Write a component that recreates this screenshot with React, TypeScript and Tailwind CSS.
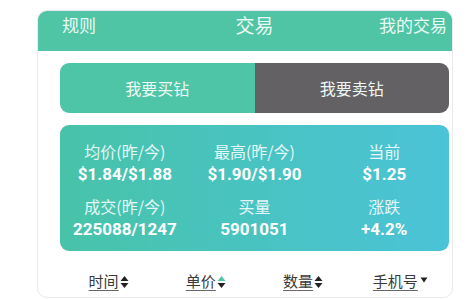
import React from "react";

const cjk = { fontFamily: '"Noto Sans CJK SC", "Noto Sans", sans-serif' };
const num = { fontFamily: 'Roboto, "Noto Sans CJK SC", sans-serif' };

function SortIcon({ active }: { active?: boolean }) {
  return (
    <svg width="9" height="14" viewBox="0 0 9 14" className="ml-[1px]">
      <path d="M0.5 6 L4.5 1 L8.5 6 Z" fill={active ? "#4ec5a5" : "#222"} />
      <path d="M0.5 8 L4.5 13 L8.5 8 Z" fill="#222" />
    </svg>
  );
}

function DownIcon() {
  return (
    <svg width="8" height="6" viewBox="0 0 8 6" className="ml-[2px] -mt-[4px]">
      <path d="M0.5 0.5 L4 5.5 L7.5 0.5 Z" fill="#222" />
    </svg>
  );
}

const stats = [
  { label: "均价(昨/今)", value: "$1.84/$1.88" },
  { label: "最高(昨/今)", value: "$1.90/$1.90" },
  { label: "当前", value: "$1.25" },
  { label: "成交(昨/今)", value: "225088/1247" },
  { label: "买量", value: "5901051" },
  { label: "涨跌", value: "+4.2%" },
];

const sorts = [
  { label: "时间", icon: <SortIcon /> },
  { label: "单价", icon: <SortIcon active /> },
  { label: "数量", icon: <SortIcon /> },
  { label: "手机号", icon: <DownIcon /> },
];

export default function App() {
  return (
    <main className="w-[469px] h-[299px] bg-white overflow-hidden pt-[10px]" style={cjk}>
      <div className="ml-[37px] w-[416px] h-[288px] rounded-[10px] border border-[#e8ebeb] bg-white overflow-hidden">
        {/* Header */}
        <div className="h-[40px] bg-[#4fc5a6] pl-[23px] pr-[4px] pt-[2px] grid grid-cols-3 items-start leading-[24px] text-[#eaf8f3]">
          <span className="text-[17px] pl-[1px]">规则</span>
          <span className="text-[19px] text-center">交易</span>
          <span className="text-[17px] text-right pr-[1px]">我的交易</span>
        </div>

        <div className="pl-[22px] pr-[3px]">
          {/* Toggle */}
          <div className="mt-[12px] h-[50px] flex rounded-[9px] overflow-hidden text-[16px] text-[#eef7f3]">
            <button className="flex-1 bg-[#4ec5a6] flex items-center justify-center">我要买钻</button>
            <button className="flex-1 bg-[#636163] flex items-center justify-center">我要卖钻</button>
          </div>

          {/* Stats */}
          <div className="mt-[12px] h-[126px] rounded-[9px] bg-gradient-to-r from-[#48c3a9] to-[#4bc3d8] grid grid-cols-3 content-start gap-y-[9px] pt-[15px]">
            {stats.map((s) => (
              <div key={s.label} className="flex flex-col items-center">
                <span className="text-[16px] leading-[23px] text-white/85">{s.label}</span>
                <span className="text-[17px] leading-[23px] font-bold text-white" style={num}>
                  {s.value}
                </span>
              </div>
            ))}
          </div>

          {/* Sort row */}
          <div className="h-[47px] grid grid-cols-4 items-center pt-[14px]">
            {sorts.map((s) => (
              <div key={s.label} className="flex items-center justify-center">
                <span className="text-[15px] text-[#3a3a3a] underline underline-offset-[3px] decoration-[#666]">
                  {s.label}
                </span>
                {s.icon}
              </div>
            ))}
          </div>
        </div>
      </div>
    </main>
  );
}
